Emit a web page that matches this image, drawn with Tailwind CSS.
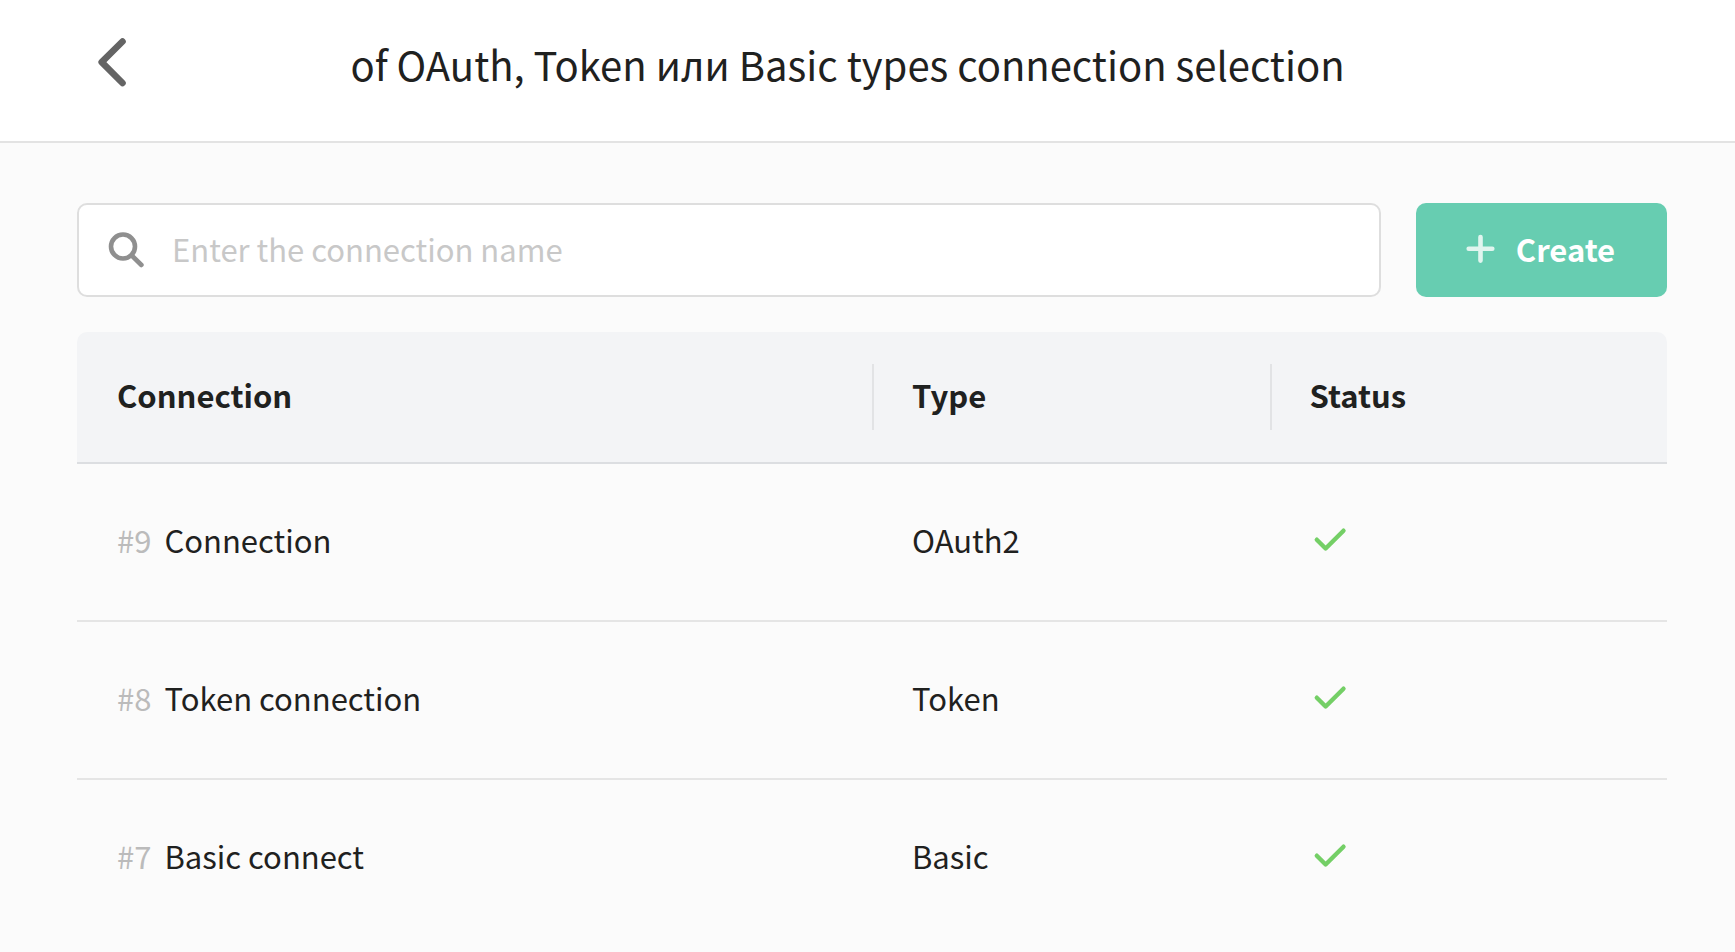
<!DOCTYPE html>
<html lang="en">

<head>
    <meta charset="UTF-8">
    <meta name="viewport" content="width=device-width, initial-scale=1.0">
    <title>Connections</title>
    <script src="https://cdn.jsdelivr.net/npm/@tailwindcss/browser@4"></script>
</head>

<body class="min-h-screen bg-[#fbfbfb] font-['Noto_Sans_CJK_SC','Noto_Sans',sans-serif] text-[31px] leading-[48px] text-[#1f2120]">
    <header class="flex items-center border-b-2 border-[#e3e3e3] bg-white px-[77px] pt-8 pb-[45px]">
        <button type="button" class="flex w-[72px] justify-center text-[#646464]" aria-label="Back">
            <svg class="h-16 w-12" viewBox="0 0 48 64" fill="none" stroke="currentColor" stroke-width="6.6"
                stroke-linecap="round" stroke-linejoin="round" aria-hidden="true">
                <path d="M33.5 9.5L12.7 30.2L33.5 51" />
            </svg>
        </button>
        <h1 class="flex-1 pr-28 text-center text-[40px] leading-[62px]">of OAuth, Token или Basic types connection selection</h1>
    </header>

    <main class="px-[68px] pt-[60px] pl-[77px]">
        <form class="flex gap-[35px]">
            <div class="flex h-[94px] flex-1 items-center gap-[25px] rounded-[10px] border-2 border-[#dedede] bg-white pr-6 pb-0.5 pl-7">
                <label for="search" class="flex-none text-[#8f8f8f]">
                    <svg class="h-10 w-10" viewBox="0 0 40 40" fill="none" stroke="currentColor" stroke-width="4.6"
                        stroke-linecap="round" role="img" aria-label="Connection name">
                        <circle cx="16" cy="17.5" r="12" />
                        <path d="M24.8 26.5L34.4 36" />
                    </svg>
                </label>
                <input type="text" id="search" placeholder="Enter the connection name"
                    class="min-w-0 flex-1 placeholder:text-[#c8c8c8] focus:outline-none">
            </div>
            <button type="button"
                class="flex h-[94px] w-[251px] items-center justify-center gap-5 rounded-[10px] bg-[#67cdb1] pr-1 pb-0.5 font-bold text-white">
                <svg class="h-8 w-8 text-white/80" viewBox="0 0 32 32" fill="none" stroke="currentColor"
                    stroke-width="4.6" stroke-linecap="round" aria-hidden="true">
                    <path d="M16.500 4V27.600M4.700 15.800H28.300" />
                </svg>
                Create
            </button>
        </form>

        <table class="mt-[35px] w-full table-fixed border-separate border-spacing-0 text-left">
            <thead>
                <tr class="h-[132px]">
                    <th class="w-1/2 rounded-tl-[10px] border-b-2 border-[#dcdee1] bg-[#f3f4f6] px-10 pb-1 font-bold">Connection</th>
                    <th class="w-1/4 border-b-2 border-[#dcdee1] bg-[#f3f4f6] font-bold">
                        <div class="flex h-[66px] items-center border-l-2 border-[#e2e3e5] pb-1 pl-[38px]">Type</div>
                    </th>
                    <th class="w-1/4 rounded-tr-[10px] border-b-2 border-[#dcdee1] bg-[#f3f4f6] font-bold">
                        <div class="flex h-[66px] items-center border-l-2 border-[#e2e3e5] pb-1 pl-[38px]">Status</div>
                    </th>
                </tr>
            </thead>
            <tbody id="rows"></tbody>
        </table>
    </main>

    <script>
        const connections = [
            { id: 9, name: 'Connection', type: 'OAuth2' },
            { id: 8, name: 'Token connection', type: 'Token' },
            { id: 7, name: 'Basic connect', type: 'Basic' },
        ]

        const rows = document.getElementById('rows')

        connections.forEach((item) => {
            const tr = document.createElement('tr')
            tr.className = 'group h-[158px]'
            tr.innerHTML = `
            <td class="border-b-2 border-[#e5e5e5] px-10 pb-1 group-last:border-transparent"><span class="mr-[13px] text-[#bbbbbb]">#${item.id}</span>${item.name}</td>
            <td class="border-b-2 border-[#e5e5e5] px-10 pb-1 group-last:border-transparent">${item.type}</td>
            <td class="border-b-2 border-[#e5e5e5] px-10 pb-1 group-last:border-transparent">
                <svg class="h-10 w-10 text-[#74cf66]" viewBox="0 0 40 40" fill="none" stroke="currentColor" stroke-width="4.4" stroke-linecap="round" stroke-linejoin="round" role="img" aria-label="Active">
                    <path d="M6.800 19.700L15.600 28.500L33.500 10.700" />
                </svg>
            </td>`
            rows.appendChild(tr)
        })
    </script>
</body>

</html>
